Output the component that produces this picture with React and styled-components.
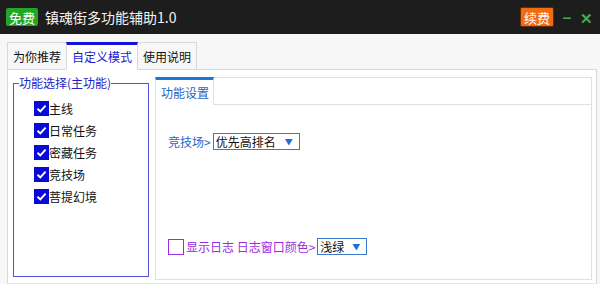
import React from 'react'
import styled, { createGlobalStyle } from 'styled-components'

const Global = createGlobalStyle`
    html, body {
        margin: 0;
        padding: 0;
        background: #f6f6f6;
    }
    body {
        font-family: "Noto Sans CJK SC", "Noto Sans", sans-serif;
        font-size: 12px;
    }
`

const Window = styled.div`
    width: 600px;
    height: 284px;
    display: flex;
    flex-direction: column;
    overflow: hidden;
    background: #f7f7f7;
`

const TitleBar = styled.div`
    height: 34px;
    flex: none;
    background: #1d1d1d;
    display: flex;
    align-items: center;
    padding: 0 8px 0 6px;
    gap: 7px;
`

const Badge = styled.span`
    display: inline-flex;
    align-items: center;
    justify-content: center;
    box-sizing: border-box;
    height: ${p => p.tall ? 20 : 18}px;
    padding: 0 3px;
    border-radius: 2px;
    background: ${p => p.bg};
    border: ${p => p.ring ? '1px solid #6b2a00' : 'none'};
    color: #fff;
    font-size: 13px;
    line-height: 1;
`

const Title = styled.span`
    color: #f2f2f2;
    font-size: 14px;
    flex: 1;
`

const WinButton = styled.span`
    color: #3cb043;
    font-size: 15px;
    font-weight: bold;
    width: 12px;
    text-align: center;
    line-height: 1;
`

const Body = styled.div`
    flex: 1;
    display: flex;
    flex-direction: column;
    padding: 8px 3px 0 7px;
`

const TabStrip = styled.div`
    display: flex;
    height: 28px;
    flex: none;
`

const Tab = styled.div`
    height: 28px;
    box-sizing: border-box;
    padding: ${p => p.active ? '0 5px 1px 5px' : '0 5px'};
    display: flex;
    align-items: center;
    font-size: 12px;
    color: ${p => p.active ? '#1a1ad0' : '#111'};
    background: ${p => p.active ? '#fff' : '#f7f7f7'};
    border: 1px solid #d8d8d8;
    border-top: ${p => p.active ? '3px solid #1414d8' : '1px solid #d8d8d8'};
    border-bottom: ${p => p.active ? '1px solid #fff' : '1px solid #d8d8d8'};
    margin-left: -1px;
    position: relative;
    z-index: ${p => p.active ? 1 : 0};
    &:first-child { margin-left: 0; }
`

const Pane = styled.div`
    flex: 1;
    margin-top: -1px;
    background: #fff;
    border: 1px solid #d8d8d8;
    border-bottom-color: #e8e8e8;
    display: flex;
    gap: 6px;
    padding: 6px 4px 3px 5px;
    min-height: 0;
`

const GroupBox = styled.fieldset`
    margin: 0 0 3px 0;
    width: 136px;
    box-sizing: border-box;
    border: 1px solid #5252d6;
    padding: 11px 0 0 20px;
    display: flex;
    flex-direction: column;
    gap: 7px;
`

const Legend = styled.legend`
    color: #2323c8;
    font-size: 12px;
    padding: 0;
    margin-left: -15px;
    line-height: 14px;
    white-space: nowrap;
`

const CheckRow = styled.label`
    display: flex;
    align-items: center;
    height: 15px;
    font-size: 12px;
    color: #111;
`

const Box = styled.span`
    width: ${p => p.size || 15}px;
    height: ${p => p.size || 15}px;
    box-sizing: border-box;
    display: inline-flex;
    align-items: center;
    justify-content: center;
    background: ${p => p.checked ? '#0a0ad8' : '#fff'};
    border: ${p => p.checked ? 'none' : `1px solid ${p.color || '#888'}`};
    flex: none;
`

const Inner = styled.div`
    flex: 1;
    display: flex;
    flex-direction: column;
    padding-top: 1px;
`

const InnerStrip = styled.div`
    display: flex;
    height: 27px;
    flex: none;
    border-top: 1px solid #e0e0e0;
    border-right: 1px solid #e0e0e0;
`

const InnerTab = styled.div`
    width: 59px;
    box-sizing: border-box;
    margin-top: -1px;
    height: 28px;
    display: flex;
    align-items: center;
    padding-left: 5px;
    font-size: 12px;
    color: #2563c8;
    background: #fff;
    border-top: 3px solid #1b78d6;
    border-left: 1px solid #e0e0e0;
    border-right: 1px solid #e0e0e0;
    position: relative;
    z-index: 1;
`

const InnerPane = styled.div`
    flex: 1;
    border: 1px solid #e0e0e0;
    margin-top: -1px;
    display: flex;
    flex-direction: column;
    padding: 28px 0 0 12px;
`

const FieldRow = styled.div`
    display: flex;
    align-items: center;
    gap: 2px;
    margin-top: ${p => p.top || 0}px;
`

const FieldLabel = styled.span`
    color: ${p => p.color};
    font-size: 12px;
    white-space: pre;
`

const Select = styled.div`
    width: ${p => p.width}px;
    height: 17px;
    box-sizing: border-box;
    border: 1px solid #3a78c8;
    display: flex;
    align-items: center;
    justify-content: space-between;
    padding: 0 6px 0 2px;
    font-size: 12px;
    color: #111;
    background: #fff;
`

const Arrow = styled.span`
    color: #1b6fd6;
    font-size: 8px;
`

const Check = () => (
    <svg width="11" height="11" viewBox="0 0 11 11">
        <path d="M1.5 5.8 L4.3 8.4 L9.6 2.6" stroke="#fff" strokeWidth="2" fill="none" />
    </svg>
)

const items = ['主线', '日常任务', '密藏任务', '竞技场', '菩提幻境']

export default function App() {
    return (
        <Window>
            <Global />
            <TitleBar>
                <Badge bg="#23a626">免费</Badge>
                <Title>镇魂街多功能辅助1.0</Title>
                <Badge bg="#f26a12" ring tall>续费</Badge>
                <WinButton>−</WinButton>
                <WinButton>✕</WinButton>
            </TitleBar>
            <Body>
                <TabStrip>
                    <Tab>为你推荐</Tab>
                    <Tab active>自定义模式</Tab>
                    <Tab>使用说明</Tab>
                </TabStrip>
                <Pane>
                    <GroupBox>
                        <Legend>功能选择(主功能)</Legend>
                        {items.map(t => (
                            <CheckRow key={t}>
                                <Box checked><Check /></Box>
                                {t}
                            </CheckRow>
                        ))}
                    </GroupBox>
                    <Inner>
                        <InnerStrip>
                            <InnerTab>功能设置</InnerTab>
                        </InnerStrip>
                        <InnerPane>
                            <FieldRow>
                                <FieldLabel color="#2467c9">竞技场&gt;</FieldLabel>
                                <Select width={87}>优先高排名<Arrow>▼</Arrow></Select>
                            </FieldRow>
                            <FieldRow top={88}>
                                <Box color="#9b2de0" size={16} />
                                <FieldLabel color="#9b2de0">显示日志 日志窗口颜色&gt;</FieldLabel>
                                <Select width={50}>浅绿<Arrow>▼</Arrow></Select>
                            </FieldRow>
                        </InnerPane>
                    </Inner>
                </Pane>
            </Body>
        </Window>
    )
}
